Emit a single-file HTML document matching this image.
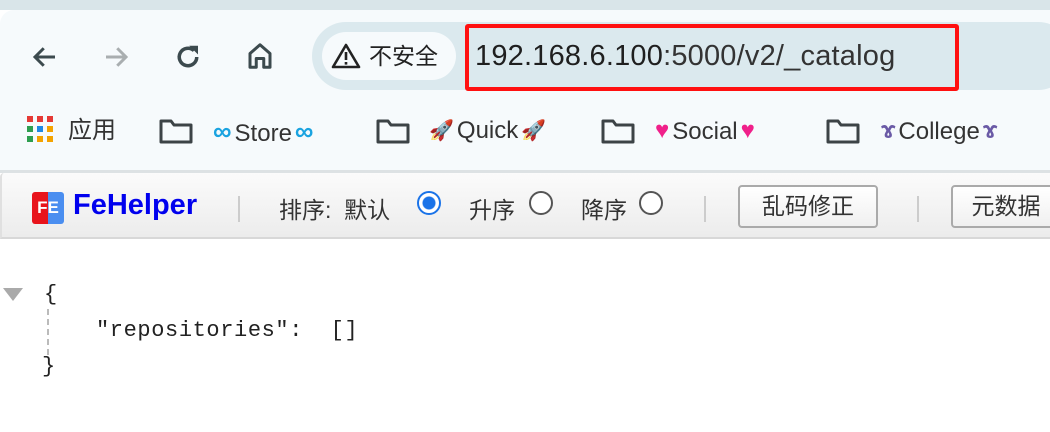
<!DOCTYPE html>
<html><head><meta charset="utf-8"><style>
*{margin:0;padding:0;box-sizing:border-box}
body{width:1050px;height:432px;overflow:hidden;background:#fff;font-family:"Liberation Sans","Noto Sans CJK SC",sans-serif;position:relative}
.a{position:absolute}
.top{left:0;top:0;width:1050px;height:10px;background:#d9e5e9}
.tb{left:0;top:10px;width:1050px;height:160px;background:#f6fafc;border-radius:14px 0 0 0}
.omni{left:312px;top:22px;width:760px;height:68px;background:#dbe9ee;border-radius:34px}
.pill{left:322px;top:32px;width:134px;height:48px;background:#f6fafc;border-radius:24px;font-size:23px;color:#222;line-height:48px;padding-left:47px}
.red{left:465px;top:24px;width:494px;height:67px;border:4px solid #ff1010;border-radius:3px}
.url{left:475px;top:40px;font-size:29px;color:#1f1f1f;white-space:nowrap;letter-spacing:0.2px}
.bm{top:114px;font-size:24px;color:#333;white-space:nowrap;line-height:34px}
.ic{font-size:20px;display:inline-block;vertical-align:1px;margin:0 3px}
.sep{left:0;top:170px;width:1050px;height:3px;background:#dde2e4}
.fe{left:0;top:173px;width:1050px;height:66px;background:linear-gradient(#fbfbfb,#ececec);border-bottom:2px solid #d8d8d8;border-left:2px solid #e0e0e0;border-radius:4px 0 0 0}
.ft{top:191px;font-size:23px;color:#333;white-space:nowrap}
.btn{top:185px;height:43px;border:2px solid #aaa;border-radius:4px;background:linear-gradient(#fff,#f0f0f0);font-size:23px;color:#333;line-height:39px;text-align:center}
.radio{width:24px;height:24px;border-radius:50%;border:2px solid #555;background:#fff}
.vs{width:2px;height:26px;background:#ccc;top:196px}
.j{font-family:"Liberation Mono","Noto Sans CJK SC",monospace;font-size:22px;color:#222;white-space:nowrap}
</style></head><body>
<div class="a top"></div>
<div class="a tb"></div>
<svg class="a" style="left:30px;top:42px" width="30" height="30" viewBox="0 0 24 24"><path d="M20 12H5M11 5l-7 7 7 7" fill="none" stroke="#3c4a4e" stroke-width="2.4"/></svg>
<svg class="a" style="left:101px;top:42px" width="30" height="30" viewBox="0 0 24 24"><path d="M4 12h15M13 5l7 7-7 7" fill="none" stroke="#a9aeb0" stroke-width="2.4"/></svg>
<svg class="a" style="left:173px;top:42px" width="30" height="30" viewBox="0 0 24 24"><path d="M19 12a7 7 0 1 1-2.2-5.1" fill="none" stroke="#3c4a4e" stroke-width="2.8"/><path d="M13 3h7v7z" fill="#3c4a4e"/></svg>
<svg class="a" style="left:245px;top:41px" width="30" height="30" viewBox="0 0 24 24"><path d="M4 21V10l8-7 8 7v11h-5v-7h-6v7z" fill="none" stroke="#3c4a4e" stroke-width="2.4" stroke-linejoin="round"/></svg>
<div class="a omni"></div>
<div class="a pill">不安全</div>
<svg class="a" style="left:331px;top:43px" width="30" height="26" viewBox="0 0 30 26"><path d="M15 2L28 24H2z" fill="none" stroke="#222" stroke-width="2.6" stroke-linejoin="round"/><rect x="13.7" y="9" width="2.6" height="8" fill="#222"/><rect x="13.7" y="19" width="2.6" height="2.6" fill="#222"/></svg>
<div class="a red"></div>
<div class="a url">192.168.6.100<span style="color:#333">:5000/v2/_catalog</span></div>
<svg class="a" style="left:27px;top:116px" width="26" height="26"><g fill="#e53935"><rect x="0" y="0" width="6" height="6"/><rect x="10" y="0" width="6" height="6"/><rect x="20" y="0" width="6" height="6"/></g><g><rect x="0" y="10" width="6" height="6" fill="#2e9e4f"/><rect x="10" y="10" width="6" height="6" fill="#1e88e5"/><rect x="20" y="10" width="6" height="6" fill="#f4a300"/><rect x="0" y="20" width="6" height="6" fill="#2e9e4f"/><rect x="10" y="20" width="6" height="6" fill="#f4a300"/><rect x="20" y="20" width="6" height="6" fill="#f4a300"/></g></svg>
<div class="a bm" style="left:68px">应用</div>
<svg class="a" style="left:159px;top:118px" width="34" height="26" viewBox="0 0 34 26"><path d="M2 3h10l3 4h17v17H2z" fill="none" stroke="#3c4346" stroke-width="3" stroke-linejoin="round"/></svg>
<div class="a bm" style="left:210px"><span class="ic" style="color:#1aa3e0;font-size:26px;font-weight:bold">∞</span>Store<span class="ic" style="color:#1aa3e0;font-size:26px;font-weight:bold">∞</span></div>
<svg class="a" style="left:376px;top:118px" width="34" height="26" viewBox="0 0 34 26"><path d="M2 3h10l3 4h17v17H2z" fill="none" stroke="#3c4346" stroke-width="3" stroke-linejoin="round"/></svg>
<div class="a bm" style="left:426px"><span class="ic">🚀</span>Quick<span class="ic">🚀</span></div>
<svg class="a" style="left:601px;top:118px" width="34" height="26" viewBox="0 0 34 26"><path d="M2 3h10l3 4h17v17H2z" fill="none" stroke="#3c4346" stroke-width="3" stroke-linejoin="round"/></svg>
<div class="a bm" style="left:652px"><span class="ic" style="color:#f0208a;font-size:24px">♥</span>Social<span class="ic" style="color:#f0208a;font-size:24px">♥</span></div>
<svg class="a" style="left:826px;top:118px" width="34" height="26" viewBox="0 0 34 26"><path d="M2 3h10l3 4h17v17H2z" fill="none" stroke="#3c4346" stroke-width="3" stroke-linejoin="round"/></svg>
<div class="a bm" style="left:878px"><span class="ic" style="color:#6a5aa6;font-weight:bold;font-size:24px">ɤ</span>College<span class="ic" style="color:#6a5aa6;font-weight:bold;font-size:24px">ɤ</span></div>
<div class="a sep"></div>
<div class="a fe"></div>
<div class="a" style="left:32px;top:192px;width:32px;height:32px;background:linear-gradient(90deg,#e8141c 50%,#4a8ef0 50%);border-radius:3px;color:#fff;font-weight:bold;font-size:17px;line-height:32px;text-align:center">FE</div>
<div class="a" style="left:73px;top:189px;font-size:29px;font-weight:bold;color:#0000ee">FeHelper</div>
<div class="a vs" style="left:238px"></div>
<div class="a ft" style="left:279px">排序:&nbsp; 默认</div>
<div class="a radio" style="left:417px;top:191px;border-color:#1a73e8;background:radial-gradient(circle,#1a73e8 6px,#fff 7px)"></div>
<div class="a ft" style="left:469px">升序</div>
<div class="a radio" style="left:529px;top:191px"></div>
<div class="a ft" style="left:581px">降序</div>
<div class="a radio" style="left:639px;top:191px"></div>
<div class="a vs" style="left:704px"></div>
<div class="a btn" style="left:738px;width:140px">乱码修正</div>
<div class="a vs" style="left:917px"></div>
<div class="a btn" style="left:951px;width:110px">元数据</div>
<svg class="a" style="left:3px;top:288px" width="20" height="14"><path d="M0 0h20L10 13z" fill="#aaa"/></svg>
<div class="a" style="left:47px;top:309px;height:46px;border-left:2px dashed #bbb"></div>
<div class="a j" style="left:44px;top:282px">{</div>
<div class="a j" style="left:96px;top:318px;letter-spacing:0.6px">"repositories":&nbsp;&nbsp;[]</div>
<div class="a j" style="left:42px;top:354px">}</div>
</body></html>
